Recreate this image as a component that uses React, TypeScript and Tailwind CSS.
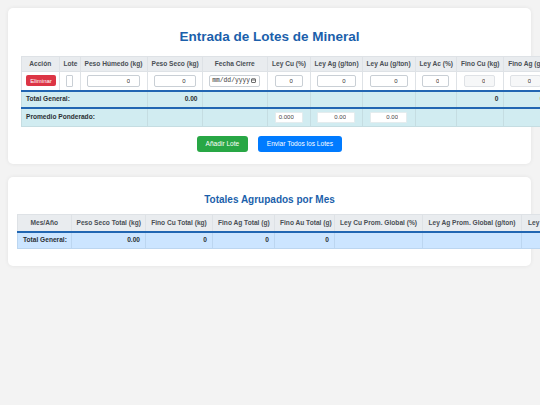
import React from "react";

type Col = { label: string; w: string };

const lotCols: Col[] = [
  { label: "Acción", w: "w-[37.5px]" },
  { label: "Lote", w: "w-[21px]" },
  { label: "Peso Húmedo (kg)", w: "w-[67px]" },
  { label: "Peso Seco (kg)", w: "w-[55px]" },
  { label: "Fecha Cierre", w: "w-[65.5px]" },
  { label: "Ley Cu (%)", w: "w-[42.5px]" },
  { label: "Ley Ag (g/ton)", w: "w-[52px]" },
  { label: "Ley Au (g/ton)", w: "w-[53px]" },
  { label: "Ley Ac (%)", w: "w-[41.5px]" },
  { label: "Fino Cu (kg)", w: "w-[46.5px]" },
  { label: "Fino Ag (g)", w: "w-[45px]" },
  { label: "Fino Au (g)", w: "w-[45px]" },
];

const monthCols: Col[] = [
  { label: "Mes/Año", w: "w-[53.5px]" },
  { label: "Peso Seco Total (kg)", w: "w-[74.5px]" },
  { label: "Fino Cu Total (kg)", w: "w-[67px]" },
  { label: "Fino Ag Total (g)", w: "w-[62px]" },
  { label: "Fino Au Total (g)", w: "w-[60px]" },
  { label: "Ley Cu Prom. Global (%)", w: "w-[88px]" },
  { label: "Ley Ag Prom. Global (g/ton)", w: "w-[99px]" },
  { label: "Ley Au Prom. Global (g/ton)", w: "w-[100px]" },
];

const cell =
  "border border-[#dee2e6] px-[4px] py-0 text-[6px] leading-[8px] align-middle whitespace-nowrap";
const th =
  "border border-[#dee2e6] bg-[#e9ecef] px-[4px] py-0 text-center text-[6.6px] leading-[8px] font-bold text-[#4a4f55] whitespace-nowrap";
const totalTd =
  "border border-[#c5dde2] border-t-2 border-t-[#2166b2] px-[4px] py-0 text-[6.6px] leading-[8px] font-bold text-[#2b2f33] align-middle whitespace-nowrap";
const totalTd2 =
  "border border-[#bcd6f0] border-t-2 border-t-[#2166b2] px-[5px] py-0 text-[6.6px] leading-[8px] font-bold text-[#2b2f33] align-middle whitespace-nowrap";

function NumInput({ w, value = "0", readOnly = false }: { w: string; value?: string; readOnly?: boolean }) {
  return (
    <input
      readOnly
      value={value}
      className={`${w} block mx-auto h-[12px] rounded-[2px] border px-0 pr-[9px] text-right text-[6px] font-normal leading-[10px] text-[#333] outline-none ${
        readOnly ? "border-[#dfe2e6] bg-[#f6f7f8]" : "border-[#c9cfd5] bg-white"
      }`}
    />
  );
}

function AvgInput({ w, value }: { w: string; value: string }) {
  return (
    <input
      readOnly
      value={value}
      className={`${w} block mx-auto h-[11px] rounded-[1px] border border-[#e4ecee] bg-white pr-[8px] text-right text-[6px] font-normal text-[#444] outline-none`}
    />
  );
}

function DateField() {
  return (
    <div className="mx-auto flex h-[12px] w-[51px] items-center justify-between rounded-[2px] border border-[#c9cfd5] bg-white pl-[2px] pr-[3px]">
      <span className="font-['Liberation_Mono',monospace] text-[6.3px] leading-none text-[#333]">mm/dd/yyyy</span>
      <svg width="5" height="5" viewBox="0 0 10 10" fill="none" stroke="#333" strokeWidth="1.4">
        <rect x="1" y="1.5" width="8" height="7.5" rx="1" />
        <line x1="1" y1="4" x2="9" y2="4" />
      </svg>
    </div>
  );
}

export default function App() {
  return (
    <div className="min-h-screen w-full overflow-hidden bg-[#f3f3f3] pt-[8px] font-['Liberation_Sans',Arial,sans-serif]">
      <section className="ml-[8px] w-[523px] rounded-[5px] bg-white px-[13px] pt-[13px] pb-[12px] shadow-[0_0_4px_rgba(0,0,0,0.07)]">
        <h2 className="mt-[8px] mb-[11px] text-center text-[13.5px] font-bold leading-[16px] text-[#1b5fab]">
          Entrada de Lotes de Mineral
        </h2>
        <table className="w-[571.5px] table-fixed border-collapse">
          <colgroup>
            {lotCols.map((c) => (
              <col key={c.label} className={c.w} />
            ))}
          </colgroup>
          <thead>
            <tr className="h-[15px]">
              {lotCols.map((c) => (
                <th key={c.label} className={th}>
                  {c.label}
                </th>
              ))}
            </tr>
          </thead>
          <tbody>
            <tr className="h-[19px] bg-white">
              <td className={`${cell} text-center`}>
                <button className="block mx-auto h-[11px] w-[30px] rounded-[2px] bg-[#dc3545] text-[6px] leading-none text-white">
                  Eliminar
                </button>
              </td>
              <td className={`${cell} text-center`}>
                <input readOnly className="block mx-auto h-[12px] w-[7px] rounded-[1px] border border-[#c9cfd5] outline-none" />
              </td>
              <td className={cell}>
                <NumInput w="w-[53px]" />
              </td>
              <td className={cell}>
                <NumInput w="w-[42px]" />
              </td>
              <td className={cell}>
                <DateField />
              </td>
              <td className={cell}>
                <NumInput w="w-[28px]" />
              </td>
              <td className={cell}>
                <NumInput w="w-[39px]" />
              </td>
              <td className={cell}>
                <NumInput w="w-[38px]" />
              </td>
              <td className={cell}>
                <NumInput w="w-[27px]" />
              </td>
              <td className={cell}>
                <NumInput w="w-[31px]" readOnly />
              </td>
              <td className={cell}>
                <NumInput w="w-[31px]" readOnly />
              </td>
              <td className={cell}>
                <NumInput w="w-[31px]" readOnly />
              </td>
            </tr>
            <tr className="h-[17px] bg-[#d1ecf1]">
              <td colSpan={3} className={`${totalTd} text-left`}>
                Total General:
              </td>
              <td className={`${totalTd} text-right`}>0.00</td>
              <td className={totalTd} />
              <td className={totalTd} />
              <td className={totalTd} />
              <td className={totalTd} />
              <td className={totalTd} />
              <td className={`${totalTd} text-right`}>0</td>
              <td className={`${totalTd} text-right`}>0</td>
              <td className={`${totalTd} text-right`}>0</td>
            </tr>
            <tr className="h-[19px] bg-[#d1ecf1]">
              <td colSpan={3} className={`${totalTd} text-left`}>
                Promedio Ponderado:
              </td>
              <td className={totalTd} />
              <td className={totalTd} />
              <td className={totalTd}>
                <AvgInput w="w-[28px]" value="0.000" />
              </td>
              <td className={totalTd}>
                <AvgInput w="w-[38px]" value="0.00" />
              </td>
              <td className={totalTd}>
                <AvgInput w="w-[37px]" value="0.00" />
              </td>
              <td className={totalTd} />
              <td className={totalTd} />
              <td className={totalTd} />
              <td className={totalTd} />
            </tr>
          </tbody>
        </table>
        <div className="mt-[9px] flex justify-center gap-[10px]">
          <button className="h-[16px] rounded-[3px] bg-[#28a745] px-[8.5px] text-[6.6px] leading-none text-white">
            Añadir Lote
          </button>
          <button className="h-[16px] rounded-[3px] bg-[#007bff] px-[9px] text-[6.6px] leading-none text-white">
            Enviar Todos los Lotes
          </button>
        </div>
      </section>

      <section className="mt-[13px] ml-[8px] w-[523px] rounded-[5px] bg-white px-[9px] pt-[13px] pb-[17px] shadow-[0_0_4px_rgba(0,0,0,0.07)]">
        <h3 className="mt-[4px] mb-[8px] text-center text-[10px] font-bold leading-[12px] text-[#1b5fab]">
          Totales Agrupados por Mes
        </h3>
        <table className="w-[604px] table-fixed border-collapse">
          <colgroup>
            {monthCols.map((c) => (
              <col key={c.label} className={c.w} />
            ))}
          </colgroup>
          <thead>
            <tr className="h-[17px]">
              {monthCols.map((c) => (
                <th key={c.label} className={`${th} px-[5px]`}>
                  {c.label}
                </th>
              ))}
            </tr>
          </thead>
          <tbody>
            <tr className="h-[17px] bg-[#cce5ff]">
              <td className={`${totalTd2} text-left`}>Total General:</td>
              <td className={`${totalTd2} text-right`}>0.00</td>
              <td className={`${totalTd2} text-right`}>0</td>
              <td className={`${totalTd2} text-right`}>0</td>
              <td className={`${totalTd2} text-right`}>0</td>
              <td className={totalTd2} />
              <td className={totalTd2} />
              <td className={totalTd2} />
            </tr>
          </tbody>
        </table>
      </section>
    </div>
  );
}
